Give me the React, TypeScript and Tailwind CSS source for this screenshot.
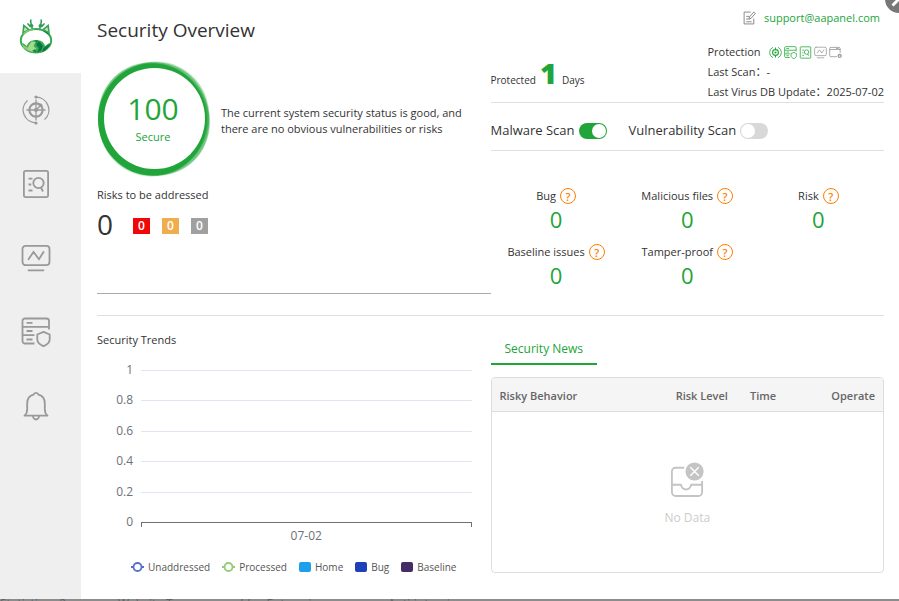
import React from "react";

type IconProps = { className?: string };

const tabs = ["Security News"];

function RadarIcon({ className }: IconProps) {
  return (
    <svg viewBox="0 0 28 30" className={className} fill="none" stroke="currentColor" aria-hidden="true">
      <path d="M14 2.2A12.8 12.8 0 0 1 22.5 24.600" strokeWidth="1.300" />
      <path d="M14 27.800A12.8 12.8 0 0 1 5.500 5.400" strokeWidth="1.300" />
      <circle cx="14" cy="15" r="6.600" strokeWidth="2.100" />
      <path d="M14 4.500v21M4.500 15h19" strokeWidth="1.300" />
      <path d="M14 15l4.500-4.500" strokeWidth="1.400" />
      <circle cx="14" cy="2" r="1.600" fill="currentColor" stroke="none" />
      <circle cx="14" cy="28" r="1.600" fill="currentColor" stroke="none" />
      <circle cx="18.700" cy="10.300" r="1.700" fill="currentColor" stroke="none" />
      <circle cx="14" cy="15" r="2" fill="currentColor" stroke="none" />
    </svg>
  );
}

function SmallRadarIcon({ className }: IconProps) {
  return (
    <svg viewBox="0 0 26 26" className={className} fill="none" stroke="currentColor" strokeWidth="2" aria-hidden="true">
      <path d="M8 2.500A11.500 11.500 0 0 0 8 23.500M18 2.500a11.500 11.500 0 0 1 0 21" strokeWidth="1.600" />
      <circle cx="13" cy="13" r="5.800" strokeWidth="2.200" />
      <circle cx="13" cy="13" r="2.200" fill="currentColor" stroke="none" />
      <path d="M13 3v4M13 19v4" />
    </svg>
  );
}

function ScanIcon({ className }: IconProps) {
  return (
    <svg viewBox="0 0 28 30" className={className} fill="none" stroke="currentColor" strokeWidth="1.800" aria-hidden="true">
      <rect x="1.900" y="1.900" width="24.200" height="26.200" rx="1.500" />
      <circle cx="16.500" cy="14" r="5.200" />
      <path d="M19 18.500l2 4M6.500 9.600h4M6.500 15.500h2.800M6.500 21.500h4" />
    </svg>
  );
}

function MonitorIcon({ className }: IconProps) {
  return (
    <svg viewBox="0 0 30 28" className={className} fill="none" stroke="currentColor" strokeWidth="1.800" strokeLinecap="round" aria-hidden="true">
      <rect x="1.500" y="1.800" width="27" height="19.400" rx="3.200" />
      <path d="M7.500 15.200l5-7.200 5.500 7.200 4.500-7.200M7.500 26.300h15" />
    </svg>
  );
}

function ServerIcon({ className }: IconProps) {
  return (
    <svg viewBox="0 0 30 30" className={className} fill="none" stroke="currentColor" strokeWidth="1.800" aria-hidden="true">
      <path d="M13.500 26.500H4A2.500 2.500 0 0 1 1.500 24V4A2.500 2.500 0 0 1 4 1.500h21.500A2.500 2.500 0 0 1 28 4v8.500M1.500 9.800H28M1.500 18.200h12M5.500 5.800h6M5.500 14h6M5.500 22.500h6" />
      <path d="M22.500 14.800l6.200 2.700v4.800c0 3.200-2.600 5.400-6.200 7-3.600-1.600-6.200-3.800-6.200-7v-4.800z" strokeLinejoin="round" />
    </svg>
  );
}

function BellIcon({ className }: IconProps) {
  return (
    <svg viewBox="0 0 26 30" className={className} fill="none" stroke="currentColor" strokeWidth="1.800" strokeLinejoin="round" aria-hidden="true">
      <path d="M1.500 24.700c2.200-1.600 2.700-3.700 2.700-6.700v-5.800c0-4.500 2.300-7.400 6.300-8.500a2.600 2.600 0 0 1 5 0c4 1.100 6.300 4 6.300 8.500V18c0 3 .5 5.100 2.700 6.700z" />
      <path d="M10 25a3 3.500 0 0 0 6 0" />
    </svg>
  );
}

function WindowIcon({ className }: IconProps) {
  return (
    <svg viewBox="0 0 28 26" className={className} fill="none" stroke="currentColor" strokeWidth="1.800" aria-hidden="true">
      <path d="M17 22H4a2.500 2.500 0 0 1-2.500-2.500V4.500A2.500 2.500 0 0 1 4 2h17.500A2.500 2.500 0 0 1 24 4.500V14M1.500 6.500H24" />
      <path d="M15 4.300h6" />
      <circle cx="23" cy="20.500" r="3.200" strokeWidth="2.800" />
    </svg>
  );
}

function Logo() {
  return (
    <svg viewBox="0 0 36 38" className="h-[38px] w-9" aria-hidden="true">
      <path d="M4 17L5.200 6l6.800 5.500zM32 17L30.800 6 24 11.500z" fill="#35a158" />
      <path d="M5.800 13.500l.8-4.500 3 2.700zM30.200 13.500l-.8-4.500-3 2.700z" fill="#c4e8b0" />
      <path d="M14.200 11.500c.2-2.500-.3-3.500-2-4.500M12.800 2c-.6 2 .4 4.300 2 6M9.900 5.800c1 1.800 2.300 2.700 4 3.100M21.800 11.500c-.2-2.500.3-3.500 2-4.500M23.200 2c.6 2-.4 4.300-2 6M26.100 5.800c-1 1.800-2.300 2.700-4 3.100" fill="none" stroke="#2f9e54" strokeWidth="1.500" strokeLinecap="round" />
      <ellipse cx="18" cy="22.500" rx="15.200" ry="11.500" fill="none" stroke="#3bab58" strokeWidth="2" />
      <path d="M3 25c2 7 8 10.500 15 10.500S31 32 33 25l-2.500.5-3.500 2.500c-.8-4-4.500-6-9-6s-8.200 2-9 6l-3.500-2.500z" fill="#3bab58" />
      <path d="M4 16.500l4-3.500 5-1.800 4 .3-6 1.800-5 3zM3.500 25.500l3 2.500 3 1 1 4-5-3z" fill="#8bcb78" />
      <path d="M10.500 28l3-4.500 4 .5-2 4 3 3-4 3-5-2z" fill="#a5d98c" />
      <path d="M21 23l4 5-2 5-4 1.500 2-4.500-3-3zM32.500 25.500l-1.500 3-4 4-3 1.500 1.500-4 3-2z" fill="#08773f" />
      <path d="M23 11.800l6 2.200 3.500 4.500-5-3.700zM17 22l3 .5-1.500 3.500zM14 33l3-2 2 3.500z" fill="#14864a" />
    </svg>
  );
}

function ScoreRing() {
  return (
    <svg viewBox="0 0 116 116" className="h-full w-full" aria-hidden="true">
      <g fill="#21a53a">
        <ellipse cx="57" cy="58" rx="55" ry="58" opacity=".25" transform="rotate(-38 57 58)" />
        <ellipse cx="57" cy="58" rx="55" ry="58" opacity=".3" transform="rotate(25 57 58)" />
        <ellipse cx="57" cy="58" rx="54" ry="57.500" opacity=".5" transform="rotate(-38 57 58)" />
        <ellipse cx="57" cy="58" rx="54.500" ry="57" opacity=".5" transform="rotate(15 57 58)" />
        <ellipse cx="55.500" cy="58.500" rx="54.500" ry="56" />
      </g>
      <circle cx="57.500" cy="57.500" r="50.500" fill="#fff" />
    </svg>
  );
}

function Help({ label }: { label: string }) {
  return (
    <button
      type="button"
      aria-label={`About ${label}`}
      className="flex size-4 items-center justify-center rounded-full border border-[#ff8000] text-[11px] leading-none font-semibold text-[#ff8000]"
    >
      ?
    </button>
  );
}

const navItems = [
  { name: "Overview", icon: <RadarIcon className="h-[30px] w-7" /> },
  { name: "Scan", icon: <ScanIcon className="h-[30px] w-7" /> },
  { name: "Monitor", icon: <MonitorIcon className="h-7 w-[30px]" /> },
  { name: "Server protection", icon: <ServerIcon className="size-[30px]" /> },
  { name: "Alarms", icon: <BellIcon className="h-[30px] w-[26px]" /> },
];

const riskCounts = [
  { level: "High", color: "bg-[#f00808]" },
  { level: "Medium", color: "bg-[#f0ad4e]" },
  { level: "Low", color: "bg-[#a0a0a0]" },
];

const stats = ["Bug", "Malicious files", "Risk", "Baseline issues", "Tamper-proof"];

const ticks = [
  { label: "1", y: 10 },
  { label: "0.8", y: 40 },
  { label: "0.6", y: 71 },
  { label: "0.4", y: 101 },
  { label: "0.2", y: 132 },
];

function Sidebar() {
  return (
    <aside className="flex w-[81px] shrink-0 flex-col bg-[#efefef]">
      <div className="flex h-[73px] items-center bg-white pl-[18px]">
        <Logo />
      </div>
      <nav className="flex w-[72px] flex-col">
        {navItems.map((item) => (
          <button key={item.name} type="button" aria-label={item.name} className="flex h-[74px] items-center justify-center text-[#999]">
            {item.icon}
          </button>
        ))}
      </nav>
    </aside>
  );
}

function ScorePanel() {
  return (
    <section className="border-b border-[#aaa] pt-4">
      <h1 className="text-[19px] leading-7">Security Overview</h1>
      <div className="mt-[17px] flex items-center gap-2">
        <div className="grid size-[116px] shrink-0 place-items-center">
          <div className="col-start-1 row-start-1 size-full">
            <ScoreRing />
          </div>
          <div className="col-start-1 row-start-1 pr-1 pb-1 text-center text-[#21a53a]">
            <div className="text-[30px] leading-10">100</div>
            <div className="text-[11px] leading-4">Secure</div>
          </div>
        </div>
        <p className="pt-1 text-[11px] leading-4">
          The current system security status is good, and there are no obvious vulnerabilities or risks
        </p>
      </div>
      <h2 className="mt-2 text-[11px] leading-5">Risks to be addressed</h2>
      <div className="flex h-[38px] items-center">
        <span className="w-9 text-[28px] leading-9">0</span>
        <div className="flex gap-3 pt-1">
          {riskCounts.map((r) => (
            <span key={r.level} title={r.level} className={`flex h-4 w-[17px] items-center justify-center text-[12px] leading-4 font-semibold text-white ${r.color}`}>
              0
            </span>
          ))}
        </div>
      </div>
      <div className="h-[50px]" />
    </section>
  );
}

function ProtectionIcons() {
  return (
    <span className="flex items-center gap-[2px] text-[#21a53a]">
      <SmallRadarIcon className="size-[13px]" />
      <ServerIcon className="size-[13px]" />
      <ScanIcon className="size-[13px]" />
      <MonitorIcon className="size-[13px] text-[#999]" />
      <WindowIcon className="size-[13px] text-[#999]" />
    </span>
  );
}

function Toggle({ id, label, on }: { id: string; label: string; on: boolean }) {
  return (
    <div className="flex items-center gap-1">
      <label htmlFor={id}>{label}</label>
      <input
        id={id}
        type="checkbox"
        role="switch"
        defaultChecked={on}
        className="h-4 w-7 appearance-none rounded-full bg-[#d8d8d8] p-px before:block before:size-[14px] before:rounded-full before:bg-white checked:bg-[#21a53a] checked:before:ml-3"
      />
    </div>
  );
}

function StatusPanel() {
  return (
    <section>
      <div className="flex items-center justify-end gap-2 pt-2 pr-1 text-[11px] leading-5">
        <svg viewBox="0 0 24 26" className="h-[14px] w-[13px] text-[#888]" fill="none" stroke="currentColor" strokeWidth="1.800" aria-hidden="true">
          <path d="M14 2H2v22h18V14M6 10h6M6 15h6M6 20h10M11 15l1-4 8-9 3 2.500-8 9z" />
        </svg>
        <a href="mailto:support@aapanel.com" className="text-[#21a53a]">support@aapanel.com</a>
      </div>
      <div className="mt-[14px] flex justify-between border-b border-[#dcdfe6] text-[11px] leading-5">
        <div className="flex items-baseline gap-1 pt-[13px] text-[10px]">
          <span>Protected</span>
          <strong className="pr-px text-[29px] leading-9 font-extrabold text-[#21a53a]">1</strong>
          <span>Days</span>
        </div>
        <div>
          <div className="flex items-center gap-2">
            Protection <ProtectionIcons />
          </div>
          <div>Last Scan：-</div>
          <div>Last Virus DB Update：2025-07-02</div>
        </div>
      </div>
      <div className="flex h-12 items-center gap-[22px] border-b border-[#dcdfe6] pt-2 text-[13px]">
        <Toggle id="malware" label="Malware Scan" on={true} />
        <Toggle id="vulnerability" label="Vulnerability Scan" on={false} />
      </div>
      <div className="grid grid-cols-3 gap-y-[10px] pt-[34px]">
        {stats.map((s) => (
          <div key={s} className="text-center">
            <div className="flex h-[22px] items-center justify-center gap-1 text-[11px]">
              {s}
              <Help label={s} />
            </div>
            <div className="text-[22px] leading-6 text-[#21a53a]">0</div>
          </div>
        ))}
      </div>
    </section>
  );
}

function Trends() {
  return (
    <section className="pt-[14px]">
      <h2 className="text-[11px] leading-5">Security Trends</h2>
      <div className="mt-[10px] pr-[19px] pl-11">
        <svg className="block h-[197px] w-full overflow-visible text-[12px]" role="img" aria-label="Security trends chart">
          {ticks.map((t) => (
            <g key={t.label}>
              <line x1="0" x2="100%" y1={t.y} y2={t.y} stroke="#e0e6f1" shapeRendering="crispEdges" />
              <text x="-8" y={t.y + 4} textAnchor="end" fill="#6e7079">{t.label}</text>
            </g>
          ))}
          <g stroke="#6e7079" shapeRendering="crispEdges">
            <line x1="0" x2="100%" y1="162" y2="162" />
            <line x1="0" x2="0" y1="162" y2="167" />
            <line x1="100%" x2="100%" y1="162" y2="167" />
          </g>
          <text x="-8" y="166" textAnchor="end" fill="#6e7079">0</text>
          <text x="50%" y="180" textAnchor="middle" fill="#6e7079">07-02</text>
        </svg>
      </div>
      <ul className="flex justify-center gap-3 text-[10px] leading-5 text-[#555]">
        <li className="flex items-center gap-1">
          <RingMark color="#5470c6" />
          Unaddressed
        </li>
        <li className="flex items-center gap-1">
          <RingMark color="#91cc75" />
          Processed
        </li>
        <li className="flex items-center gap-1">
          <span className="h-[10px] w-3 rounded-[2px] bg-[#1e9feb]" />
          Home
        </li>
        <li className="flex items-center gap-1">
          <span className="h-[10px] w-3 rounded-[2px] bg-[#1e40b8]" />
          Bug
        </li>
        <li className="flex items-center gap-1">
          <span className="h-[10px] w-3 rounded-[2px] bg-[#452c66]" />
          Baseline
        </li>
      </ul>
    </section>
  );
}

function RingMark({ color }: { color: string }) {
  return (
    <svg viewBox="0 0 13 12" className="h-3 w-[13px]" aria-hidden="true">
      <path d="M0 6h13" stroke={color} strokeWidth="2" />
      <circle cx="6.500" cy="6" r="4" fill="#fff" stroke={color} strokeWidth="1.800" />
    </svg>
  );
}

function News() {
  return (
    <section className="pt-4">
      <div role="tablist" className="flex">
        {tabs.map((t) => (
          <button key={t} type="button" role="tab" aria-selected="true" className="h-[33px] border-b-2 border-[#21a53a] px-[14px] pt-[2px] text-[12px] text-[#21a53a]">
            {t}
          </button>
        ))}
      </div>
      <div className="mt-3 overflow-hidden rounded-[4px] border border-[#ddd]">
        <table className="w-full table-fixed border-collapse text-[11px] text-[#666]">
          <thead>
            <tr className="h-[33px] border-b border-[#ddd] bg-[#f5f5f5] text-left">
              <th className="w-[45%] px-2 pt-1 font-semibold">Risky Behavior</th>
              <th className="w-[19%] px-2 pt-1 font-semibold">Risk Level</th>
              <th className="px-2 pt-1 font-semibold">Time</th>
              <th className="w-[19%] px-2 pt-1 text-right font-semibold">Operate</th>
            </tr>
          </thead>
          <tbody>
            <tr>
              <td colSpan={4} className="h-[161px] pt-2 text-center text-[#ccc]">
                <svg viewBox="0 0 36 38" className="mx-auto h-9 w-[34px]" fill="none" stroke="#c4c4c4" strokeWidth="2" aria-hidden="true">
                  <path d="M15 6H6a4 4 0 0 0-4 4v22a4 4 0 0 0 4 4h24a4 4 0 0 0 4-4V20M2 24h9.500c.8 3 2.300 5 5.500 5s4.700-2 5.500-5H34" />
                  <circle cx="26" cy="10" r="9.600" fill="#c4c4c4" stroke="none" />
                  <path d="M21.500 5.500l9 9M30.500 5.500l-9 9" stroke="#fff" strokeWidth="1.500" />
                </svg>
                <div className="mt-2 text-[12px] leading-6">No Data</div>
              </td>
            </tr>
          </tbody>
        </table>
      </div>
    </section>
  );
}

export default function App() {
  return (
    <div className="relative flex min-h-screen flex-col overflow-hidden bg-white font-['Open_Sans','Noto_Sans_CJK_SC',sans-serif] text-[#333]">
      <div className="flex flex-1">
        <Sidebar />
        <main className="min-w-0 flex-1 pr-[15px] pl-4">
          <div className="grid grid-cols-2 items-start border-b border-[#dcdfe6] pb-[21px]">
            <ScorePanel />
            <StatusPanel />
          </div>
          <div className="grid grid-cols-2 items-start">
            <Trends />
            <News />
          </div>
        </main>
      </div>
      <footer className="flex h-[2px] overflow-hidden bg-[#8c8c8c] text-[12px] leading-[10px] text-[#626262]">
        <span className="w-[118px]">Statistics-v2</span>
        <span className="w-[270px]">Website Tamper-proof for Enterprise</span>
        <span>Anti-intrusion</span>
      </footer>
      <button type="button" aria-label="Close" className="absolute -top-[15px] -right-[14px] flex size-7 items-center justify-center rounded-full bg-[#777]">
        <svg viewBox="0 0 16 16" className="size-4" stroke="#fff" strokeWidth="3" aria-hidden="true">
          <path d="M1.500 1.500l13 13M14.500 1.500l-13 13" />
        </svg>
      </button>
    </div>
  );
}
